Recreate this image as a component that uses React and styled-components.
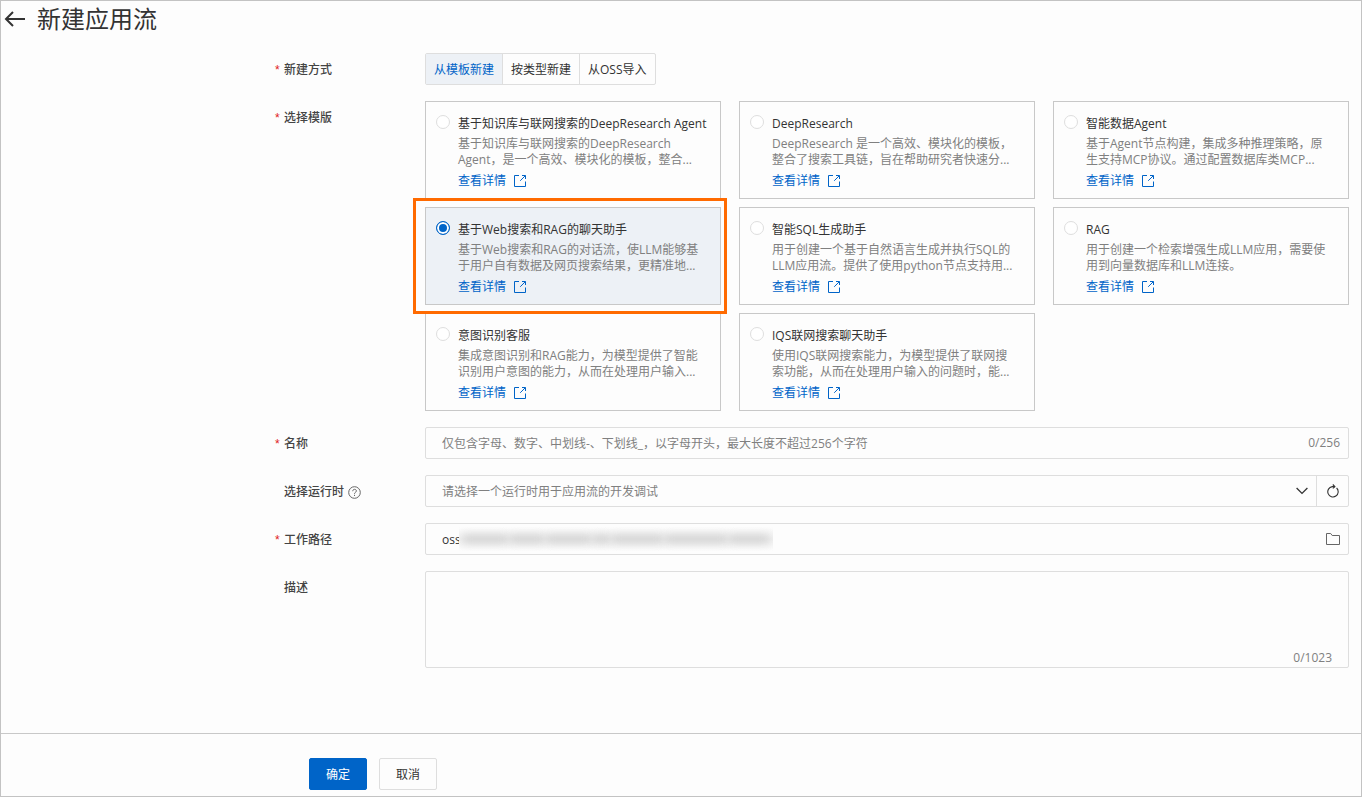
import React, { useState } from "react";
import styled, { createGlobalStyle } from "styled-components";

const blue = "#0064c8";
const line = "#dedede";

const GlobalStyle = createGlobalStyle`
  *, *::before, *::after { box-sizing: border-box; }
  body {
    margin: 0;
    background: #fdfdfd;
    color: #333;
    font-family: "Open Sans", "Noto Sans CJK SC", sans-serif;
    font-size: 12px;
    line-height: 16px;
  }
  button, input, select, textarea { font: inherit; color: inherit; margin: 0; }
`;

const Page = styled.div`
  display: flex;
  flex-direction: column;
  min-height: 100vh;
  border: 1px solid #c3c3c3;
`;

const Header = styled.header`
  display: flex;
  align-items: center;
  gap: 11px;
  height: 36px;
  padding: 0 0 1px 3px;
`;

const BackButton = styled.button`
  display: flex;
  padding: 0;
  border: 0;
  background: none;
`;

const Title = styled.h1`
  margin: 0;
  font-size: 24px;
  font-weight: 400;
  line-height: 32px;
`;

const Form = styled.form`
  display: flex;
  flex: 1;
  flex-direction: column;
`;

const Fields = styled.div`
  display: flex;
  flex: 1;
  flex-direction: column;
  gap: 16px;
  padding: 16px 12px 64px 274px;
`;

const Field = styled.div`
  display: grid;
  grid-template-columns: 150px minmax(0, 1fr);
`;

const LabelCell = styled.div`
  display: flex;
  align-items: center;
  gap: 4px;
  height: 32px;
  padding-top: 2px;
  color: #444;
  font-weight: 500;
`;

const Star = styled.span`
  width: 5px;
  color: #e02020;
  font-family: "Liberation Sans", sans-serif;
  font-weight: 400;
`;

const Segments = styled.div`
  display: flex;
  justify-self: start;
  height: 32px;
  border: 1px solid ${line};
  border-radius: 2px;
`;

const Segment = styled.button`
  padding: 2px 8px 0;
  border: 0;
  border-left: 1px solid ${line};
  background: ${(p) => (p.$active ? "#edf1f6" : "transparent")};
  color: ${(p) => (p.$active ? blue : "#333")};
  &:first-child { border-left: 0; }
`;

const Cards = styled.div`
  display: grid;
  grid-template-columns: repeat(3, minmax(0, 1fr));
  gap: 8px 18px;
`;

const Card = styled.div`
  position: relative;
  display: grid;
  grid-template-columns: 14px minmax(0, 1fr);
  column-gap: 8px;
  padding: 13px 10px 9px;
  border: 1px solid #c8c8c8;
  background: ${(p) => (p.$selected ? "#edf1f6" : "transparent")};
`;

const Highlight = styled.span`
  position: absolute;
  inset: -10px -7px -10px -13px;
  z-index: 1;
  border: 3px solid #ff6a00;
  pointer-events: none;
`;

const Radio = styled.input`
  appearance: none;
  width: 14px;
  height: 14px;
  border: 1px solid ${line};
  border-radius: 50%;
  background: #fff;
  &:checked {
    border-color: ${blue};
    background: ${blue};
    box-shadow: inset 0 0 0 2px #fff;
  }
`;

const CardBody = styled.div`
  display: flex;
  flex-direction: column;
  align-items: flex-start;
  gap: 4px;
  padding-top: 1px;
  white-space: pre;
`;

const CardText = styled.p`
  margin: 0;
  color: #808080;
`;

const DetailLink = styled.a`
  display: flex;
  align-items: center;
  gap: 8px;
  padding-top: 1px;
  color: ${blue};
  text-decoration: none;
`;

const Box = styled.div`
  display: flex;
  align-items: center;
  height: 32px;
  padding: 0 8px 0 16px;
  border: 1px solid ${line};
  border-radius: 2px;
`;

const TextInput = styled.input`
  flex: 1;
  min-width: 0;
  height: 24px;
  padding: 0;
  border: 0;
  outline: 0;
  background: none;
  &::placeholder { color: #808080; opacity: 1; }
`;

const PathInput = styled(TextInput)`
  flex: 0 0 17px;
`;

const Redaction = styled.span`
  display: flex;
  flex: 0 0 314px;
  gap: 2px;
  height: 24px;
  padding: 8px 4px;
  background: linear-gradient(#fdfdfd, #f0f0f0, #fdfdfd);
  overflow: hidden;
`;

const Smudge = styled.span`
  flex: ${(p) => p.$grow};
  background: #d0d0d0;
  filter: blur(4px);
`;

const Count = styled.span`
  color: #808080;
`;

const SelectBox = styled(Box)`
  padding: 0;
`;

const Select = styled.select`
  flex: 1;
  min-width: 0;
  height: 30px;
  padding: 2px 16px 0;
  border: 0;
  outline: 0;
  appearance: none;
  background: none;
  color: #808080;
`;

const Chevron = styled.svg`
  margin-right: 8px;
  pointer-events: none;
`;

const IconButton = styled.button`
  display: flex;
  align-items: center;
  justify-content: center;
  padding: 0;
  border: 0;
  background: none;
`;

const RefreshButton = styled(IconButton)`
  width: 32px;
  height: 30px;
  border-left: 1px solid ${line};
`;

const FolderButton = styled(IconButton)`
  margin-left: auto;
`;

const AreaBox = styled.div`
  display: flex;
  flex-direction: column;
  height: 97px;
  padding: 4px 16px 1px;
  border: 1px solid ${line};
  border-radius: 2px;
`;

const Area = styled.textarea`
  flex: 1;
  padding: 0;
  border: 0;
  outline: 0;
  resize: none;
  background: none;
`;

const AreaCount = styled(Count)`
  align-self: flex-end;
`;

const Footer = styled.footer`
  display: flex;
  gap: 12px;
  padding: 24px 0 6px 308px;
  border-top: 1px solid #c8c8c8;
`;

const ActionButton = styled.button`
  width: 58px;
  height: 32px;
  padding: 2px 0 0;
  border: 1px solid ${(p) => (p.$primary ? blue : line)};
  border-radius: 2px;
  background: ${(p) => (p.$primary ? blue : "#fdfdfd")};
  color: ${(p) => (p.$primary ? "#fff" : "#333")};
`;

const modes = ["从模板新建", "按类型新建", "从OSS导入"];

const templates = [
  ["基于知识库与联网搜索的DeepResearch Agent", "基于知识库与联网搜索的DeepResearch\nAgent，是一个高效、模块化的模板，整合..."],
  ["DeepResearch", "DeepResearch 是一个高效、模块化的模板，\n整合了搜索工具链，旨在帮助研究者快速分..."],
  ["智能数据Agent", "基于Agent节点构建，集成多种推理策略，原\n生支持MCP协议。通过配置数据库类MCP..."],
  ["基于Web搜索和RAG的聊天助手", "基于Web搜索和RAG的对话流，使LLM能够基\n于用户自有数据及网页搜索结果，更精准地..."],
  ["智能SQL生成助手", "用于创建一个基于自然语言生成并执行SQL的\nLLM应用流。提供了使用python节点支持用..."],
  ["RAG", "用于创建一个检索增强生成LLM应用，需要使\n用到向量数据库和LLM连接。"],
  ["意图识别客服", "集成意图识别和RAG能力，为模型提供了智能\n识别用户意图的能力，从而在处理用户输入..."],
  ["IQS联网搜索聊天助手", "使用IQS联网搜索能力，为模型提供了联网搜\n索功能，从而在处理用户输入的问题时，能..."],
];

function ExternalIcon() {
  return (
    <svg width="12" height="12" viewBox="0 0 12 12" fill="none" stroke="currentColor" aria-hidden="true">
      <path d="M5 .5H.5v11h11V6.5M8 .5h3.5V4M11.3.7 6.2 5.8" />
    </svg>
  );
}

function FieldLabel({ htmlFor, id, required, children, extra }) {
  return (
    <LabelCell>
      <Star aria-hidden="true">{required ? "*" : ""}</Star>
      <label htmlFor={htmlFor} id={id}>{children}</label>
      {extra}
    </LabelCell>
  );
}

export default function App() {
  const [mode, setMode] = useState(0);
  const [selected, setSelected] = useState(3);
  const [name, setName] = useState("");
  const [description, setDescription] = useState("");

  return (
    <Page>
      <GlobalStyle />
      <Header>
        <BackButton type="button" aria-label="返回">
          <svg width="22" height="20" viewBox="0 0 22 20" fill="none" stroke="#333" strokeWidth="2">
            <path d="M21 10H2M9 3 2 10 9 17" />
          </svg>
        </BackButton>
        <Title>新建应用流</Title>
      </Header>
      <Form onSubmit={(e) => e.preventDefault()}>
        <Fields>
          <Field>
            <FieldLabel id="mode-label" required>新建方式</FieldLabel>
            <Segments role="group" aria-labelledby="mode-label">
              {modes.map((text, i) => (
                <Segment key={text} type="button" $active={i === mode} aria-pressed={i === mode} onClick={() => setMode(i)}>
                  {text}
                </Segment>
              ))}
            </Segments>
          </Field>
          <Field>
            <FieldLabel id="template-label" required>选择模版</FieldLabel>
            <Cards role="radiogroup" aria-labelledby="template-label">
              {templates.map(([title, text], i) => (
                <Card key={title} $selected={i === selected}>
                  <Radio type="radio" name="template" id={`template-${i}`} checked={i === selected} onChange={() => setSelected(i)} />
                  <CardBody>
                    <label htmlFor={`template-${i}`}>{title}</label>
                    <CardText>{text}</CardText>
                    <DetailLink href="#details">查看详情<ExternalIcon /></DetailLink>
                  </CardBody>
                  {i === selected && <Highlight />}
                </Card>
              ))}
            </Cards>
          </Field>
          <Field>
            <FieldLabel htmlFor="name" required>名称</FieldLabel>
            <Box>
              <TextInput
                id="name"
                value={name}
                maxLength={256}
                onChange={(e) => setName(e.target.value)}
                placeholder="仅包含字母、数字、中划线-、下划线_，以字母开头，最大长度不超过256个字符"
              />
              <Count>{name.length}/256</Count>
            </Box>
          </Field>
          <Field>
            <FieldLabel
              htmlFor="runtime"
              extra={
                <svg width="13" height="13" viewBox="0 0 13 13" fill="none" stroke="#666" aria-hidden="true">
                  <circle cx="6.5" cy="6.5" r="5.8" />
                  <path d="M4.7 5.2c0-2.5 3.7-2.4 3.7-.2 0 1.3-1.9 1.3-1.9 2.8M6.5 8.8v1.2" />
                </svg>
              }
            >
              选择运行时
            </FieldLabel>
            <SelectBox>
              <Select id="runtime" defaultValue="">
                <option value="">请选择一个运行时用于应用流的开发调试</option>
              </Select>
              <Chevron width="12" height="8" viewBox="0 0 12 8" fill="none" stroke="#333" strokeWidth="1.3" aria-hidden="true">
                <path d="M.6 1 6 6.4 11.4 1" />
              </Chevron>
              <RefreshButton type="button" aria-label="刷新">
                <svg width="12" height="14" viewBox="0 0 12 14" fill="none" stroke="#333" strokeWidth="1.1">
                  <path d="M9.6 4A5.2 5.2 0 1 1 5.2 2.6H7.4" />
                  <path d="M5.8.5 7.9 2.6 5.8 4.4" />
                </svg>
              </RefreshButton>
            </SelectBox>
          </Field>
          <Field>
            <FieldLabel htmlFor="path" required>工作路径</FieldLabel>
            <Box>
              <PathInput id="path" defaultValue="oss" />
              <Redaction aria-hidden="true">
                {[8, 6, 8, 3, 9, 11, 7].map((grow, i) => <Smudge key={i} $grow={grow} />)}
              </Redaction>
              <FolderButton type="button" aria-label="选择路径">
                <svg width="14" height="12" viewBox="0 0 14 12" fill="none" stroke="#666">
                  <path d="M.5 11.5V.5h4.2l1.5 2h7.3v9z" />
                </svg>
              </FolderButton>
            </Box>
          </Field>
          <Field>
            <FieldLabel htmlFor="description">描述</FieldLabel>
            <AreaBox>
              <Area id="description" maxLength={1023} value={description} onChange={(e) => setDescription(e.target.value)} />
              <AreaCount>{description.length}/1023</AreaCount>
            </AreaBox>
          </Field>
        </Fields>
        <Footer>
          <ActionButton type="submit" $primary>确定</ActionButton>
          <ActionButton type="button">取消</ActionButton>
        </Footer>
      </Form>
    </Page>
  );
}
